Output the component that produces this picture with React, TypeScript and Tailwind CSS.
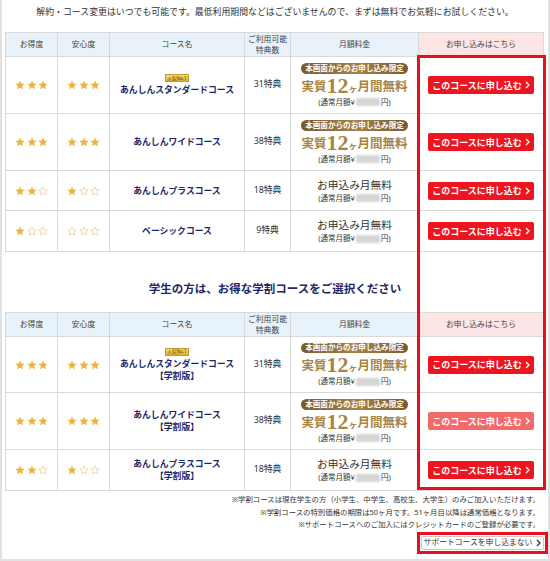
import React from "react";

const FONT = '"Noto Sans", "Noto Sans CJK JP", sans-serif';

function Star({ filled }: { filled: boolean }) {
  return (
    <svg width="10" height="10" viewBox="0 0 24 24">
      <path
        d="M12 2.2l2.9 6.7 7.2.6-5.5 4.8 1.7 7.1L12 17.6l-6.3 3.8 1.7-7.1L1.9 9.5l7.2-.6z"
        fill={filled ? "#e8b640" : "none"}
        stroke={filled ? "#e8b640" : "#e9c987"}
        strokeWidth={filled ? 1 : 1.6}
        strokeLinejoin="round"
      />
    </svg>
  );
}

function Stars({ n }: { n: number }) {
  return (
    <div className="flex gap-[1.5px]">
      {[0, 1, 2].map((i) => (
        <Star key={i} filled={i < n} />
      ))}
    </div>
  );
}

function Blur() {
  return <span className="inline-block w-[24px] h-[8px] bg-[#d6d6d6] blur-[1.2px] mx-[1px]" />;
}

function NormalPrice() {
  return (
    <div className="text-[7.5px] text-[#333] leading-[9px] h-[9px] flex items-center">
      (通常月額¥<Blur />円)
    </div>
  );
}

function Limited() {
  return (
    <div className="flex flex-col items-center">
      <div className="rounded-full bg-gradient-to-r from-[#7a5a2c] via-[#a6834a] to-[#7a5a2c] text-white text-[7.6px] font-bold leading-none px-[4px] py-[1.5px] w-[107px] text-center">
        本画面からのお申し込み限定
      </div>
      <div className="flex items-end h-[19px] mt-[1px] text-[#a7843f] font-bold">
        <span className="text-[12.5px] leading-[14px]">実質</span>
        <span className="text-[22px] leading-[17px]" style={{ fontFamily: '"Liberation Serif", serif' }}>
          12
        </span>
        <span className="text-[9px] leading-[10px]">ヶ</span>
        <span className="text-[12.5px] leading-[14px]">月間無料</span>
      </div>
      <div className="mt-[4px]">
        <NormalPrice />
      </div>
    </div>
  );
}

function Simple() {
  return (
    <div className="flex flex-col items-center">
      <div className="text-[10.7px] text-[#333] leading-[12px]">お申込み月無料</div>
      <div className="mt-[3px]">
        <NormalPrice />
      </div>
    </div>
  );
}

function ApplyButton({ light }: { light?: boolean }) {
  return (
    <div
      className={`${light ? "bg-[#f36a6a]" : "bg-[#ec1520]"} text-white font-bold text-[9px] leading-none rounded-[2px] h-[18px] w-[106px] flex items-center justify-center gap-[3px]`}
    >
      <span>このコースに申し込む</span>
      <svg width="5" height="8" viewBox="0 0 5 8">
        <path d="M1 1l3 3-3 3" fill="none" stroke="#fff" strokeWidth="1.3" />
      </svg>
    </div>
  );
}

function Badge() {
  return (
    <div className="w-[24px] h-[8px] bg-gradient-to-b from-[#f6dc7c] to-[#d9ab2c] border border-[#c49a2a] flex items-center justify-center text-[4.5px] leading-none text-[#5a3a00] mb-[2px]">
      人気No.1
    </div>
  );
}

type Row = {
  a: number;
  b: number;
  name: string;
  sub?: boolean;
  badge?: boolean;
  perks: string;
  limited: boolean;
  h: string;
  light?: boolean;
};

const cell = "border-r border-b border-[#d9d9d9] flex items-center justify-center";

function Table({ rows }: { rows: Row[] }) {
  return (
    <div className="ml-[3px] w-[539px] border-l border-t border-[#d9d9d9] grid grid-cols-[52px_52px_135px_46px_128px_125px]">
      <div className={`${cell} h-[24px] bg-[#e8f2fb] text-[7.8px] text-[#444]`}>お得度</div>
      <div className={`${cell} h-[24px] bg-[#e8f2fb] text-[7.8px] text-[#444]`}>安心度</div>
      <div className={`${cell} h-[24px] bg-[#e8f2fb] text-[7.8px] text-[#444]`}>コース名</div>
      <div className={`${cell} h-[24px] bg-[#e8f2fb] text-[7.8px] text-[#444] flex-col leading-[10.5px]`}>
        <span>ご利用可能</span>
        <span>特典数</span>
      </div>
      <div className={`${cell} h-[24px] bg-[#e8f2fb] text-[7.8px] text-[#444]`}>月額料金</div>
      <div className={`${cell} h-[24px] bg-[#fde5e5] text-[7.8px] text-[#444]`}>お申し込みはこちら</div>
      {rows.map((r, i) => (
        <React.Fragment key={i}>
          <div className={`${cell} ${r.h}`}>
            <Stars n={r.a} />
          </div>
          <div className={`${cell} ${r.h}`}>
            <Stars n={r.b} />
          </div>
          <div className={`${cell} ${r.h} flex-col`}>
            {r.badge && <Badge />}
            <div className="text-[8.8px] font-bold text-[#1d2769] leading-[12px]">{r.name}</div>
            {r.sub && <div className="text-[8.8px] font-bold text-[#1d2769] leading-[12px]">【学割版】</div>}
          </div>
          <div className={`${cell} ${r.h} text-[8.8px] text-[#333]`}>{r.perks}</div>
          <div className={`${cell} ${r.h}`}>{r.limited ? <Limited /> : <Simple />}</div>
          <div className={`${cell} ${r.h}`}>
            <ApplyButton light={r.light} />
          </div>
        </React.Fragment>
      ))}
    </div>
  );
}

const rows1: Row[] = [
  { a: 3, b: 3, name: "あんしんスタンダードコース", badge: true, perks: "31特典", limited: true, h: "h-[57px]" },
  { a: 3, b: 3, name: "あんしんワイドコース", perks: "38特典", limited: true, h: "h-[57px]" },
  { a: 2, b: 1, name: "あんしんプラスコース", perks: "18特典", limited: false, h: "h-[40px]" },
  { a: 1, b: 0, name: "ベーシックコース", perks: "9特典", limited: false, h: "h-[41px]" },
];

const rows2: Row[] = [
  { a: 3, b: 3, name: "あんしんスタンダードコース", sub: true, badge: true, perks: "31特典", limited: true, h: "h-[56px]" },
  { a: 3, b: 3, name: "あんしんワイドコース", sub: true, perks: "38特典", limited: true, h: "h-[57px]", light: true },
  { a: 2, b: 1, name: "あんしんプラスコース", sub: true, perks: "18特典", limited: false, h: "h-[41px]" },
];

export default function App() {
  return (
    <div className="w-[550px] h-[561px] bg-white overflow-hidden" style={{ fontFamily: FONT }}>
      <div className="relative w-[550px] h-[561px] border-x-2 border-b-2 border-[#e1e1e1]">
        <div className="h-[32px] flex items-center justify-center text-[8.9px] text-[#333] pb-[8px]">
          解約・コース変更はいつでも可能です。最低利用期間などはございませんので、まずは無料でお気軽にお試しください。
        </div>
        <Table rows={rows1} />
        <div className="h-[60px] flex items-center justify-center pt-[13px] text-[11.5px] font-bold text-[#1d2769]">
          学生の方は、お得な学割コースをご選択ください
        </div>
        <Table rows={rows2} />
        <div className="flex flex-col items-end pr-[8px] pt-[2px] text-[7.4px] text-[#333] leading-[12.5px]">
          <div>※学割コースは現在学生の方（小学生、中学生、高校生、大学生）のみご加入いただけます。</div>
          <div>※学割コースの特別価格の期限は50ヶ月です。51ヶ月目以降は通常価格となります。</div>
          <div>※サポートコースへのご加入にはクレジットカードのご登録が必要です。</div>
        </div>
        <div className="flex justify-end mt-[1px]">
          <div className="border-[3px] border-[#e60f1e] p-[1px] w-[131px] h-[22px] flex">
            <div className="flex-1 border border-[#c8c8c8] rounded-[2px] bg-white flex items-center justify-center gap-[4px] text-[7.8px] leading-none text-[#333] whitespace-nowrap">
              <span>サポートコースを申し込まない</span>
              <svg width="5" height="8" viewBox="0 0 5 8">
                <path d="M1 1l3 3-3 3" fill="none" stroke="#333" strokeWidth="1.3" />
              </svg>
            </div>
          </div>
        </div>
        <div className="absolute left-[415px] top-[55px] w-[129px] h-[435px] border-[3px] border-[#e60f1e] pointer-events-none" />
      </div>
    </div>
  );
}
